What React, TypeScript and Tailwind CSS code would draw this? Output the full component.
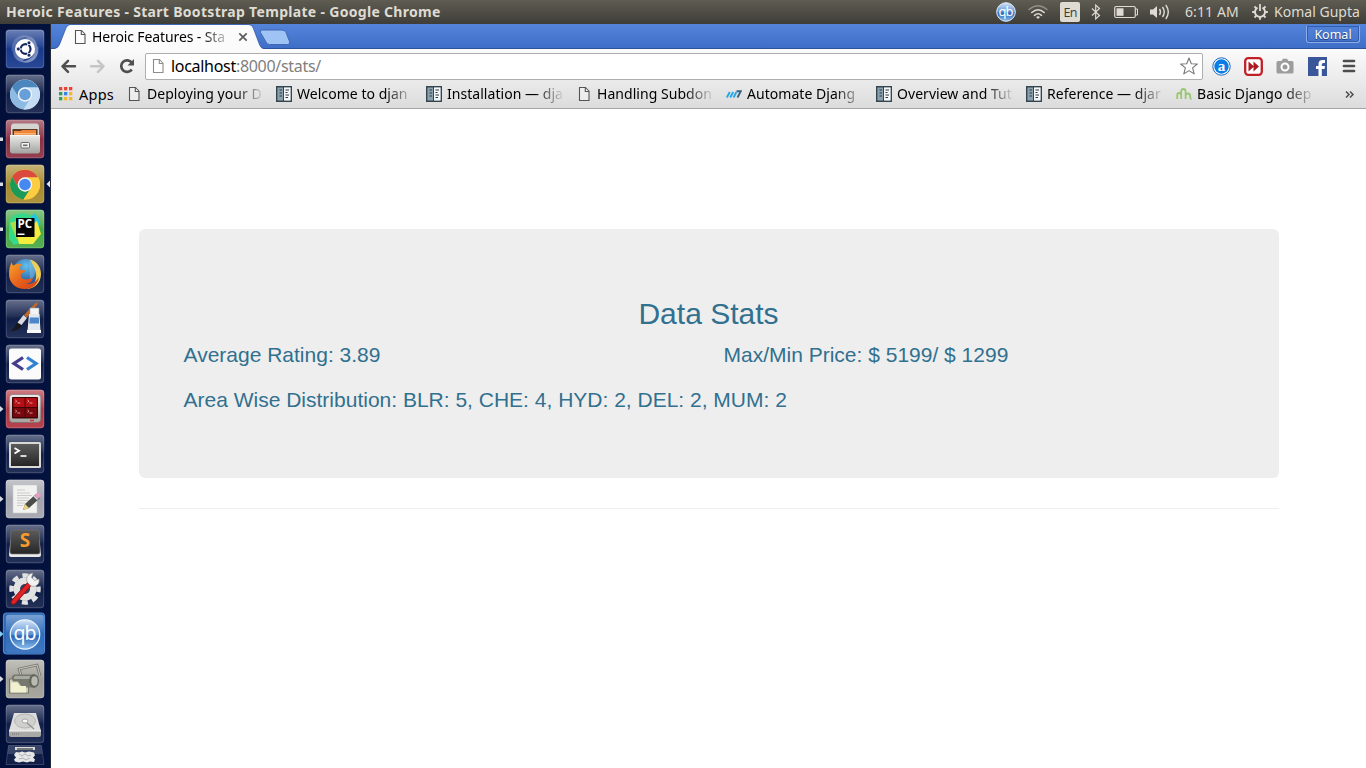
import React from "react";

type IconProps = { children: React.ReactNode };

const launcherFont = "'Noto Sans', sans-serif";

function Defs() {
  return (
    <svg width="0" height="0" className="absolute">
      <defs>
        <linearGradient id="gloss" x1="0" y1="0" x2="0" y2="1">
          <stop offset="0" stopColor="#fff" stopOpacity="0.36" />
          <stop offset="0.42" stopColor="#fff" stopOpacity="0.08" />
          <stop offset="0.5" stopColor="#fff" stopOpacity="0" />
          <stop offset="1" stopColor="#fff" stopOpacity="0.08" />
        </linearGradient>
        <linearGradient id="metal" x1="0" y1="0" x2="0" y2="1">
          <stop offset="0" stopColor="#ececea" />
          <stop offset="1" stopColor="#a3a3a0" />
        </linearGradient>
        <linearGradient id="dark" x1="0" y1="0" x2="0" y2="1">
          <stop offset="0" stopColor="#5b5b5b" />
          <stop offset="1" stopColor="#262626" />
        </linearGradient>
        <linearGradient id="orb" x1="0" y1="0" x2="0" y2="1">
          <stop offset="0" stopColor="#d5e6f8" />
          <stop offset="0.5" stopColor="#5b91d3" />
          <stop offset="0.55" stopColor="#2764b4" />
          <stop offset="1" stopColor="#8fc0ee" />
        </linearGradient>
        <linearGradient id="flame" x1="0" y1="0" x2="1" y2="1">
          <stop offset="0" stopColor="#f6a52c" />
          <stop offset="0.5" stopColor="#e8641d" />
          <stop offset="1" stopColor="#d23c14" />
        </linearGradient>
        <radialGradient id="globe" cx="0.5" cy="0.25" r="0.8">
          <stop offset="0" stopColor="#63c0ea" />
          <stop offset="1" stopColor="#15388a" />
        </radialGradient>
        <linearGradient id="swirl" x1="0" y1="0" x2="1" y2="1">
          <stop offset="0" stopColor="#fff" stopOpacity="0.1" />
          <stop offset="1" stopColor="#fff" stopOpacity="0.5" />
        </linearGradient>
      </defs>
    </svg>
  );
}

function Tile({ color, children }: IconProps & { color: string }) {
  return (
    <svg width="40" height="40" viewBox="0 0 40 40" className="block shrink-0">
      <rect x="0.8" y="0.8" width="38.4" height="38.4" rx="3.2" fill={color} />
      <rect x="0.8" y="0.8" width="38.4" height="38.4" rx="3.2" fill="url(#gloss)" />
      <rect x="1.3" y="1.3" width="37.4" height="37.4" rx="2.8" fill="none" stroke="#fff" strokeOpacity="0.16" />
      {children}
    </svg>
  );
}

const NAVY = "#111f49";

function UbuntuIcon() {
  return (
    <Tile color="#17398c">
      <path d="M7 23C4 9 18 2 27 9c-9-3-16 2-17 10zM33 17c3 14-11 21-20 14 9 3 16-2 17-10zM17 33C6 31 6 17 12 11c-3 8 1 15 8 18zM23 7c11 2 11 16 5 22 3-8-1-15-8-18z" fill="url(#swirl)" />
      <circle cx="20" cy="20" r="10" fill="#fff" />
      <circle cx="20.6" cy="20" r="4.9" fill="none" stroke="#17275e" strokeWidth="2.2" />
      <path d="M20.6 20L13 20M20.6 20l4 -7.5M20.6 20l4 7.5" stroke="#fff" strokeWidth="1.1" />
      <circle cx="13.3" cy="20" r="1.9" fill="#17275e" stroke="#fff" strokeWidth="0.7" />
      <circle cx="24" cy="13.8" r="1.9" fill="#17275e" stroke="#fff" strokeWidth="0.7" />
      <circle cx="24" cy="26.2" r="1.9" fill="#17275e" stroke="#fff" strokeWidth="0.7" />
    </Tile>
  );
}

function ChromeMark({ a, b, c, center }: { a: string; b: string; c: string; center: string }) {
  return (
    <g>
      <circle cx="20" cy="20.5" r="15" fill={c} />
      <path d="M7 13A15 15 0 0 1 33 13.5H20A7 7 0 0 0 13.9 24z" fill={a} />
      <path d="M7 13A15 15 0 0 0 18.5 35.4L26 24A7 7 0 0 1 13.9 24z" fill={b} />
      <path d="M20 13.5H33.3A15 15 0 0 1 18.5 35.4L26 24A7 7 0 0 0 20 13.5z" fill={c} />
      <circle cx="20" cy="20.5" r="7.2" fill="#f1f4f8" />
      <circle cx="20" cy="20.5" r="5.8" fill={center} />
    </g>
  );
}

function FilesIcon() {
  return (
    <Tile color="#8b2f42">
      <path d="M6 8q0-3.500 3-3.500h22q3 0 3 3.500v9H6z" fill="#d4d4d1" />
      <path d="M7.500 10h25v7h-25z" fill="#5c3a25" />
      <path d="M9 12h7l1-1h14v6H9z" fill="#ee8538" />
      <path d="M9 14h22v1.500H9z" fill="#f8b57a" />
      <path d="M5 16h30v15.500q0 3-2.500 3h-25q-2.500 0-2.500-3z" fill="url(#metal)" />
      <path d="M5 16.500h30" stroke="#f6f6f4" />
      <rect x="16" y="23.500" width="8.500" height="5.500" rx="1" fill="#f4f4f2" stroke="#6a6a66" />
      <rect x="18" y="25.500" width="4.500" height="1.600" fill="#6a6a66" />
    </Tile>
  );
}

function PyCharmIcon() {
  return (
    <Tile color="#48a944">
      <path d="M4 12l5-6 8-2 12 3 3 14-14 12-9 3-5-6z" fill="#35d98a" />
      <path d="M26 8l4-4 5 9-3 9z" fill="#21c6e8" />
      <path d="M5 14l7 17 2-20z" fill="#a8dc4a" />
      <path d="M12 26l20-14 4 13-8 10-14 0z" fill="#f2ec3f" />
      <rect x="11" y="9" width="18.500" height="19" fill="#050505" />
      <text x="12.500" y="19" fontFamily="'Open Sans', sans-serif" fontWeight="700" fontSize="11.500" fill="#fff">PC</text>
      <rect x="12.500" y="24.500" width="7" height="1.500" fill="#fff" />
    </Tile>
  );
}

function FirefoxIcon() {
  return (
    <Tile color={NAVY}>
      <circle cx="21" cy="19" r="14" fill="url(#globe)" />
      <path d="M25 5.500c6 1.500 11 7 11 14.500 0 9-7 15-15 15 8-3 11-9 10-15-.5-5-3-8-6-14.500z" fill="#f0cd55" />
      <path d="M24 5.500c4 3 6 7 6 12 0 4-2 7-5 8z" fill="#8fd0ee" opacity=".4" />
      <path d="M7 8c0 2 .5 3 1.500 3.500 3-2 6-2 9-1-2 1-3.500 3-2.500 5l5 1c0 2-3 2.500-4 3.500-1 2.500 1 5.500 5 5.500 3 0 4-2 7-1-1 3-3.500 5-7 5.500 6 .5 10-2 13-7-1 7.500-6.500 12-14 12C11 35 4 29 4 20c0-5 1-9 3-12z" fill="url(#flame)" />
    </Tile>
  );
}

function PaintIcon() {
  return (
    <Tile color={NAVY}>
      <path d="M5 32c4-1 5-6 8-9l4 3c-2 4-6 6-12 6z" fill="#16181c" />
      <path d="M12.500 23.500l6-7.500 3.500 3-5.500 7z" fill="#d8dade" />
      <path d="M19 16L31 3.500l2 1-11 14z" fill="#c36a22" />
      <path d="M25 9h9v7h-9z" fill="#f2f4f6" stroke="#9aa2aa" strokeWidth=".6" />
      <path d="M24 15h10.500l1 17h-13z" fill="#e3e9ef" />
      <path d="M24.800 18.500h9l.3 6h-9.800z" fill="#4c87c9" />
      <path d="M22 31h14v3H22z" fill="#fafafa" />
    </Tile>
  );
}

function CodeIcon() {
  return (
    <Tile color={NAVY}>
      <rect x="4" y="4.500" width="32" height="31" rx="2.500" fill="#fbfbfb" />
      <path d="M18 13.500l-9 6 9 6" fill="none" stroke="#433d8c" strokeWidth="3.300" />
      <path d="M22 13.500l9 6-9 6" fill="none" stroke="#3182d2" strokeWidth="3.300" />
    </Tile>
  );
}

function TerminatorIcon() {
  return (
    <Tile color="#b03440">
      <rect x="4.300" y="5.500" width="31.500" height="28" rx="3.500" fill="url(#metal)" stroke="#77706e" strokeWidth=".6" />
      <rect x="7" y="8" width="26" height="21.500" rx="1" fill="#3f0608" />
      {[8.300, 20.500].map((x) =>
        [9, 19].map((y) => (
          <g key={`${x}-${y}`}>
            <rect x={x} y={y} width="11.300" height="9" fill={y === 9 ? "#b50f16" : "#780a0f"} />
            <path d={`M${x + 2} ${y + 2}l1.500 1.200-1.500 1.200M${x + 4} ${y + 5}h3`} stroke="#f0b9b9" strokeWidth=".8" fill="none" />
          </g>
        ))
      )}
      <path d="M25 31.500h4" stroke="#d03030" strokeWidth="1.500" />
    </Tile>
  );
}

function TerminalIcon() {
  return (
    <Tile color={NAVY}>
      <rect x="4" y="8" width="32" height="26" rx="1.500" fill="#d9d9d6" />
      <rect x="6" y="10" width="28" height="22" fill="url(#dark)" />
      <path d="M9.500 14l4.500 2.700-4.500 2.700" fill="none" stroke="#fff" strokeWidth="1.800" />
      <path d="M15.500 22h6" stroke="#fff" strokeWidth="1.600" />
    </Tile>
  );
}

function EditorIcon() {
  return (
    <Tile color="#a3a4ad">
      <rect x="8" y="6" width="24" height="28" fill="#f2f2f0" stroke="#c9c9c6" strokeWidth=".6" />
      <path d="M12 11h8M12 14h13M12 16.500h15M12 19h12M12 21.500h14M12 24h8M12 26.500h6" stroke="#c6c6c6" strokeWidth=".9" />
      <path d="M18 31l2-6 11-10 4 4-11 10z" fill="#4a4d48" />
      <path d="M18 31l2-6 4 4z" fill="#ead57d" />
      <path d="M29.500 16.500l2-2q2-1.500 3.500 0t0 3.500l-2 2z" fill="#e49bc5" />
      <path d="M29 17l3.500 3.500" stroke="#d9dddf" strokeWidth="1.500" />
    </Tile>
  );
}

function SublimeIcon() {
  return (
    <Tile color={NAVY}>
      <path d="M5.500 16L4 31q0 2 2 2h28q2 0 2-2l-1.500-15z" fill="#e8e8e8" />
      <path d="M8 6h24q2 0 2.300 2L35 28q0 2-2 2H7q-2 0-2-2L5.800 8Q6 6 8 6z" fill="url(#dark)" stroke="#777" strokeWidth=".6" />
      <text x="20" y="22.500" textAnchor="middle" fontFamily="'Open Sans', sans-serif" fontWeight="700" fontSize="19" fill="#f79a2d">S</text>
    </Tile>
  );
}

function SettingsIcon() {
  return (
    <Tile color={NAVY}>
      <circle cx="20" cy="20" r="11.500" fill="#e2e2e2" />
      <circle cx="20" cy="20" r="13.500" fill="none" stroke="#e2e2e2" strokeWidth="4.500" strokeDasharray="6 4.603" strokeDashoffset="3" />
      <circle cx="20" cy="20" r="5" fill="#31405f" />
      <path d="M8.500 33l15-17" stroke="#8d0c10" strokeWidth="5.500" strokeLinecap="round" />
      <path d="M8.500 33l15-17" stroke="#dd2326" strokeWidth="4" strokeLinecap="round" />
      <path d="M22 13q-1.500-6 3.500-8.500l2.500-.5-1.500 4.500 3 3 4.500-1.500q1 5-3.500 7-3 1-5-.5z" fill="#f1f1f1" stroke="#88898c" strokeWidth=".6" />
    </Tile>
  );
}

function QbIcon() {
  return (
    <svg width="44" height="44" viewBox="-3 -2 44 44" className="-my-0.5 -ml-[3px] block shrink-0">
      <rect x="-1.500" y="-1" width="41" height="41" rx="3.500" fill="#2d66b0" stroke="#4b88cf" strokeWidth="1.200" />
      <rect x="0.800" y="0.800" width="38" height="38" rx="3" fill="#2f6cbb" />
      <rect x="0.800" y="0.800" width="38" height="38" rx="3" fill="url(#gloss)" />
      <circle cx="20" cy="20.500" r="14.700" fill="url(#orb)" stroke="#e8f2fc" strokeWidth="1.300" />
      <text x="20" y="26" textAnchor="middle" fontFamily={launcherFont} fontSize="19.500" textLength="23" fill="#fff">qb</text>
    </svg>
  );
}

function ScannerIcon() {
  return (
    <Tile color="#a09f97">
      <path d="M17 19l-3-9 18-4 3 11" fill="none" stroke="#77776e" strokeWidth="2.800" strokeLinejoin="round" />
      <path d="M17 19l-3-9 18-4 3 11" fill="none" stroke="#c9c9c2" strokeWidth="1" />
      <path d="M4.500 20h19v14h-19z" fill="#cfcfb8" stroke="#666659" strokeWidth=".8" />
      <path d="M9 15.500h21v13H17l-4-6H8q-3-5 1-7z" fill="#77796f" />
      <path d="M10 17h16v3H9q-.5-2 1-3z" fill="#a8aaa0" />
      <ellipse cx="29" cy="22" rx="5" ry="6.700" fill="#63655d" />
      <ellipse cx="29.500" cy="22" rx="3.200" ry="4.800" fill="#b9bab1" />
      <path d="M6 23.500h6l3 3.500h6v6.500H6z" fill="#f1f0cf" />
    </Tile>
  );
}

function DiskIcon() {
  return (
    <Tile color={NAVY}>
      <path d="M9 9h22l5 18H4z" fill="#dededc" />
      <path d="M4 27h32v4q0 2-2 2H6q-2 0-2-2z" fill="#a9a9a7" />
      <path d="M4 27h32" stroke="#f7f7f7" />
      <ellipse cx="20" cy="17" rx="10.500" ry="7" fill="#d0d0ce" stroke="#b4b4b2" />
      <ellipse cx="20" cy="17" rx="3" ry="2" fill="#f6f6f6" stroke="#a8a8a8" />
      <path d="M29 25l-7-6" stroke="#8f8f8d" strokeWidth="1.200" />
      <path d="M7 30h8" stroke="#6e6e6e" strokeDasharray="1 1" />
    </Tile>
  );
}

function FoldedTrashIcon() {
  return (
    <svg width="40" height="24" viewBox="0 0 40 24" className="-mt-[5px] block shrink-0">
      <path d="M3.500 1.500h33L39 20.500H1z" fill={NAVY} stroke="#fff" strokeOpacity=".18" />
      <path d="M3.500 1.500h33L37.500 10h-35z" fill="#fff" opacity=".16" />
      <path d="M10 3h20v3H10z" fill="#dadada" />
      <path d="M12 5h16" stroke="#53595f" strokeWidth="1.500" />
      <path d="M11 8l3 .5 3-1 3 1 4-1 5 1 1 3-2 2 2 2-1 2.500-4-.5-3 1-4-1-4 1-4-1-1-2 2-2-2-2.500z" fill="#e6e8e8" />
      <path d="M14 10l3 2 3-2 3 2 3-1M14 15l4-1 3 2 4-2" stroke="#a9b0b4" fill="none" />
    </svg>
  );
}

function Launcher() {
  const items: { icon: React.ReactNode; mark?: "pip" | "arrow" | "blue"; active?: boolean }[] = [
    { icon: <UbuntuIcon /> },
    { icon: <Tile color={NAVY}><ChromeMark a="#4b86bd" b="#8dbbe4" c="#c4ddf3" center="#679fd8" /></Tile> },
    { icon: <FilesIcon />, mark: "pip" },
    { icon: <Tile color="#a78a2e"><ChromeMark a="#dc4a3e" b="#1b9a58" c="#fdcd41" center="#4688f1" /></Tile>, mark: "pip", active: true },
    { icon: <PyCharmIcon />, mark: "pip" },
    { icon: <FirefoxIcon /> },
    { icon: <PaintIcon /> },
    { icon: <CodeIcon /> },
    { icon: <TerminatorIcon />, mark: "arrow" },
    { icon: <TerminalIcon /> },
    { icon: <EditorIcon />, mark: "arrow" },
    { icon: <SublimeIcon /> },
    { icon: <SettingsIcon /> },
    { icon: <QbIcon />, mark: "blue" },
    { icon: <ScannerIcon />, mark: "arrow" },
    { icon: <DiskIcon /> },
  ];
  return (
    <nav className="flex w-[51px] shrink-0 flex-col gap-[5px] overflow-hidden border-r border-[#252b38] bg-linear-to-r from-[#020f39] to-[#03123e] pt-[5px]">
      {items.map((item, i) => (
        <div key={i} className="flex h-10 shrink-0 items-center">
          <svg width="5" height="10" viewBox="0 0 5 10" className="shrink-0">
            {item.mark === "pip" && <path d="M0 3.500h3v3.500H0z" fill="#d7dade" />}
            {item.mark === "arrow" && <path d="M0 2l3.500 3L0 8z" fill="#d7dade" />}
            {item.mark === "blue" && <path d="M0 2l3.500 3L0 8z" fill="#7fcdf2" />}
          </svg>
          <div className="w-10 shrink-0">{item.icon}</div>
          {item.active && (
            <svg width="5" height="8" viewBox="0 0 5 8" className="shrink-0">
              <path d="M5 .500v7L1.500 4z" fill="#e4e6e9" />
            </svg>
          )}
        </div>
      ))}
      <div className="pl-[5px]"><FoldedTrashIcon /></div>
    </nav>
  );
}

function SystemBar() {
  return (
    <header className="flex h-6 shrink-0 items-center bg-linear-to-b from-[#5f5d52] to-[#3e3d38] font-['Noto_Sans',sans-serif] text-[14px] leading-6 text-[#dfdbd2]">
      <div className="w-[990px] shrink-0 pl-1.5 font-bold whitespace-nowrap tracking-[0.31px]">Heroic Features - Start Bootstrap Template - Google Chrome</div>
      <div className="flex w-[376px] items-center">
        <svg width="32" height="24" viewBox="0 0 32 24">
          <circle cx="16" cy="12" r="9.300" fill="url(#orb)" stroke="#e5eefa" strokeWidth="1" />
          <text x="16" y="16" textAnchor="middle" fontFamily={launcherFont} fontSize="13" textLength="15" fill="#fff">qb</text>
        </svg>
        <svg width="32" height="24" viewBox="0 0 32 24" fill="none" strokeLinecap="round">
          <path d="M7 9.500Q16 2 25 9.500" stroke="#8f8d83" strokeWidth="1.500" />
          <path d="M9.800 12.500Q16 7 22.200 12.500" stroke="#dfdbd2" strokeWidth="1.600" />
          <path d="M12.500 15.300Q16 12.200 19.500 15.300" stroke="#dfdbd2" strokeWidth="1.600" />
          <path d="M14 17q2-1.500 4 0l-2 2z" fill="#dfdbd2" />
        </svg>
        <div className="ml-1.5 flex h-5 w-5 items-center justify-center rounded-[2px] bg-[#dfdbd2] pt-px font-['Open_Sans',sans-serif] text-[12.5px] tracking-[-0.8px] text-[#3c3b37]">En</div>
        <svg width="32" height="24" viewBox="0 0 32 24" fill="none" stroke="#dfdbd2" strokeWidth="1.200">
          <path d="M12 8.500l7.500 7-3.800 3.500V5l3.800 3.500-7.500 7" />
        </svg>
        <svg width="32" height="24" viewBox="0 0 32 24">
          <rect x="2.700" y="6.500" width="20.600" height="11" rx="1.500" fill="none" stroke="#dfdbd2" strokeWidth="1.200" />
          <rect x="4.500" y="8.300" width="7" height="7.500" fill="#dfdbd2" />
          <path d="M24 9h1.500v6H24" stroke="#dfdbd2" fill="none" />
        </svg>
        <svg width="34" height="24" viewBox="0 0 34 24" fill="none" stroke="#dfdbd2" strokeWidth="1.400">
          <path d="M6 9.500h3l4-3.500v12l-4-3.500H6z" fill="#dfdbd2" stroke="none" />
          <path d="M15.500 9q2 3 0 6M18.500 7q3.500 5 0 10M21.800 5q5 7 0 14" />
        </svg>
        <span className="ml-[7px] w-[66px] whitespace-nowrap tracking-[0.1px]">6:11 AM</span>
        <svg width="18" height="24" viewBox="0 0 18 24" fill="none" stroke="#dfdbd2">
          <path d="M6.500 7.600A5 5 0 1 0 11.500 7.600" strokeWidth="1.900" />
          <path d="M9 4v7" strokeWidth="1.800" />
          <path d="M1.200 12h2.600M14.200 12h2.600M9 17.200v2.600M3.500 6.500l1.800 1.800M14.500 6.500l-1.800 1.800M3.500 17.500l1.800-1.800M14.500 17.500l-1.800-1.800" strokeWidth="1.900" />
        </svg>
        <span className="ml-[5px] whitespace-nowrap tracking-[0.02px]">Komal Gupta</span>
      </div>
    </header>
  );
}

function PageIcon({ color = "#555" }: { color?: string }) {
  return (
    <svg width="16" height="16" viewBox="0 0 16 16" className="shrink-0" fill="#fff" fillOpacity=".4" stroke={color} strokeWidth="1.100">
      <path d="M3.500 1.500h6l3.500 3.700v9.300H3.500z" />
      <path d="M9.300 1.500v4h3.700" />
    </svg>
  );
}

function DocsIcon() {
  return (
    <svg width="16" height="16" viewBox="0 0 16 16" className="shrink-0">
      <path d="M.700.700h14.600v14.600H.700z" fill="#8ba0ad" stroke="#35454f" strokeWidth="1.400" />
      <path d="M8 1.500h6.500v13H8z" fill="#f5f6f7" />
      <path d="M7.500 1v14" stroke="#35454f" />
      <path d="M3.500 4h2.500M3.500 7h2.500M3.500 10h2.500M9.500 4h3.500M9.500 6.500h2M9.500 9h3.500M9.500 11.500h2.500" stroke="#2c3a44" strokeWidth="1.200" />
    </svg>
  );
}

function AutomateIcon() {
  return (
    <svg width="16" height="16" viewBox="0 0 16 16" className="shrink-0" fill="none" strokeWidth="1.900">
      <path d="M.800 11.500l3-5.500M4.200 11.500l3-5.500M7.600 11.500l2.800-5.500" stroke="#25a7e8" />
      <path d="M10.500 5.200h4.300l-3.300 6.300" stroke="#3d6484" />
    </svg>
  );
}

function HostIcon() {
  return (
    <svg width="16" height="16" viewBox="0 0 16 16" className="shrink-0" fill="none" stroke="#9cc772" strokeWidth="1.800">
      <path d="M1.200 13V9.500q0-2.500 2-2.500t2 2.500V13M5.200 9V5.500q0-2.500 2.200-2.500t2.200 2.500V13M9.600 10q0-2.500 2.300-2.500t2.300 2.500v1.500q0 1.500 1.300 1.500" />
    </svg>
  );
}

function AppsIcon() {
  const colors = ["#ea4335", "#ea4335", "#ea4335", "#2f9e59", "#3b82e8", "#f4b62b", "#2f9e59", "#f4b62b", "#f4b62b"];
  return (
    <svg width="14" height="14" viewBox="0 0 14 14" className="shrink-0">
      {colors.map((c, i) => (
        <rect key={i} x={(i % 3) * 5} y={Math.floor(i / 3) * 5} width="3.300" height="3.300" fill={c} />
      ))}
    </svg>
  );
}

const bookmarks: { icon: React.ReactNode; label: string }[] = [
  { icon: <PageIcon />, label: "Deploying your D" },
  { icon: <DocsIcon />, label: "Welcome to djan" },
  { icon: <DocsIcon />, label: "Installation — dja" },
  { icon: <PageIcon />, label: "Handling Subdon" },
  { icon: <AutomateIcon />, label: "Automate Djang" },
  { icon: <DocsIcon />, label: "Overview and Tut" },
  { icon: <DocsIcon />, label: "Reference — djar" },
  { icon: <HostIcon />, label: "Basic Django dep" },
];

function TabStrip() {
  return (
    <div className="flex h-[25px] shrink-0 items-start justify-between border-b border-[#2d529b] bg-linear-to-b from-[#5484da] to-[#3f6ec8]">
      <div className="relative z-10 flex h-[25px] w-[245px] items-center">
        <svg width="245" height="25" viewBox="0 0 245 25" className="absolute left-0 top-0">
          <path d="M0 25h3q4-.500 5.500-4L15 4q1.300-3 4-3h179q3 0 4.200 3l6.300 17q1.500 4 5 4z" fill="#fbfbfb" />
          <path d="M0 24.500h3q4-.500 5.500-4L15 4q1.300-3.500 4-3.500h179q3 0 4.200 3.500l6.300 16.500q1.500 4 5 4" fill="none" stroke="#34599f" strokeOpacity=".7" />
          <path d="M211 6h20q3 0 4 2.500l3.500 9q1 3-2 3h-18q-2.500 0-3.500-2.500L209.500 8.500Q208.500 6 211 6z" fill="#a0c3f5" stroke="#4069b4" />
        </svg>
        <div className="relative flex items-center pl-[21px] pt-px">
          <PageIcon />
          <span className="ml-1 w-[140px] whitespace-nowrap bg-linear-to-r from-black from-[78%] to-transparent bg-clip-text text-[14px] leading-5 tracking-[-0.12px] text-transparent">Heroic Features - Sta</span>
          <svg width="10" height="10" viewBox="0 0 10 10" className="ml-[6px]"><path d="M1.300 1.300l7.400 7.400M8.700 1.300L1.300 8.700" stroke="#5c5c5c" strokeWidth="1.700" /></svg>
        </div>
      </div>
      <div className="mr-1.5 mt-0.5 flex h-[17px] w-[54px] items-center justify-center rounded-b-[3px] border border-t-0 border-[#8caee8] pt-[3px] text-[12.5px] leading-none text-white shadow-[inset_0_0_0_1px_#315caf] [text-shadow:0_1px_1px_#16336e]">Komal</div>
    </div>
  );
}

function Toolbar() {
  return (
    <div className="flex h-[60px] shrink-0 flex-col border-b border-[#a5a5a5] bg-linear-to-b from-[#fbfbfb] to-[#dcdcdc]">
      <div className="flex h-[34px] items-center">
        <svg width="94" height="28" viewBox="0 0 94 28" fill="none" className="shrink-0">
          <path d="M24 14.300H11.500M17 8.800l-5.500 5.500 5.500 5.500" stroke="#4f4f4f" strokeLinecap="round" strokeLinejoin="round" strokeWidth="2.500" />
          <path d="M40 14.300h12.500M47 8.800l5.500 5.500-5.500 5.500" stroke="#c6c6c6" strokeLinecap="round" strokeLinejoin="round" strokeWidth="2.500" />
          <path d="M80.800 10.800A5.800 5.800 0 1 0 80.800 17.400" stroke="#4f4f4f" strokeWidth="2.700" />
          <path d="M83 7v6.500h-6.500z" fill="#4f4f4f" />
        </svg>
        <div className="flex h-[27px] w-[1058px] shrink-0 items-center rounded-[2px] border border-[#aeaeae] bg-white">
          <div className="ml-1"><PageIcon color="#8d8d8d" /></div>
          <span className="ml-[5px] grow text-[16px] leading-6 tracking-[-0.3px] text-[#808080]"><span className="text-black">localhost</span>:8000/stats/</span>
          <svg width="18" height="18" viewBox="0 0 18 18" className="mr-1" fill="#fff" stroke="#777" strokeWidth="1.100" strokeLinejoin="round">
            <path d="M9 1l2.300 5.700 6 .300-4.700 3.900 1.600 6L9 13.600 3.800 16.900l1.600-6L.700 7l6-.300z" />
          </svg>
        </div>
        <div className="flex h-[28px] grow items-center">
          <svg width="19" height="19" viewBox="0 0 19 19" className="ml-[9px]">
            <circle cx="9.500" cy="9.500" r="8.700" fill="#fff" stroke="#1766bb" strokeWidth="1" />
            <circle cx="9.500" cy="9.500" r="7.200" fill="#0b7ce5" />
            <text x="9.500" y="13.700" textAnchor="middle" fontFamily="'Liberation Serif', serif" fontWeight="700" fontSize="15" fill="#fff">a</text>
          </svg>
          <svg width="19" height="19" viewBox="0 0 19 19" className="ml-[13px]">
            <rect x="1.200" y="1.200" width="16.600" height="16.600" rx="3" fill="#fff" stroke="#c02026" strokeWidth="2.300" />
            <path d="M4.500 4.500l5.500 5-5.500 5zM9.500 4.500l5.500 5-5.500 5z" fill="#ad1a20" />
          </svg>
          <svg width="18" height="18" viewBox="0 0 18 18" className="ml-[13px]">
            <path d="M2 4h3.500l1.500-2.200h4L12.500 4H16q1.500 0 1.500 1.500V15q0 1.500-1.500 1.500H2Q.500 16.500.500 15V5.500Q.500 4 2 4z" fill="#9c9c9c" />
            <circle cx="9" cy="10" r="3.500" fill="none" stroke="#fff" strokeWidth="2" />
          </svg>
          <svg width="19" height="19" viewBox="0 0 19 19" className="ml-[14px]">
            <rect width="19" height="19" fill="#3a5899" />
            <path d="M10.500 19v-7H8V9h2.500V7q0-4 4-4H17v3h-1.700q-1.500 0-1.500 1.500V9H17l-.500 3h-2.700v7z" fill="#fff" />
          </svg>
          <svg width="14" height="14" viewBox="0 0 14 14" className="ml-[15px]">
            <path d="M2 2h10M2 7h10M2 12h10" stroke="#4d4d4d" strokeWidth="2.700" strokeLinecap="round" />
          </svg>
        </div>
      </div>
      <div className="flex h-[22px] items-center text-[14px] leading-[22px] text-black">
        <div className="flex w-[75px] shrink-0 items-center pl-2">
          <AppsIcon />
          <span className="ml-1.5 text-[14.5px] tracking-[0.25px]">Apps</span>
        </div>
        {bookmarks.map((b) => (
          <div key={b.label} className="flex w-[150px] shrink-0 items-center">
            {b.icon}
            <span className="ml-[5px] w-[118px] whitespace-nowrap bg-linear-to-r from-black from-[74%] to-transparent bg-clip-text tracking-[0.04px] text-transparent">{b.label}</span>
          </div>
        ))}
        <svg width="10" height="9" viewBox="0 0 10 9" className="ml-[19px]" fill="none" stroke="#4c4c4c" strokeWidth="1.500"><path d="M1 1.500l3 3-3 3M5 1.500l3 3-3 3" /></svg>
      </div>
    </div>
  );
}

export default function App() {
  return (
    <div className="flex h-[768px] w-[1366px] flex-col overflow-hidden bg-white">
      <Defs />
      <SystemBar />
      <div className="flex min-h-0 grow">
        <Launcher />
        <div className="flex w-[1315px] flex-col font-['Noto_Sans',sans-serif]">
          <TabStrip />
          <Toolbar />
          <main className="mx-[88px] mt-[120px] w-[1140px] font-['Liberation_Sans',Arial,sans-serif] text-[#31708f]">
            <section className="h-[249px] rounded-[6px] bg-[#eeeeee] pt-[68px] pr-[45.5px] pl-[44.5px]">
              <h1 className="text-center text-[30px] leading-[33px]">Data Stats</h1>
              <div className="mt-[10px] grid grid-cols-2 text-[21px] leading-[30px]">
                <p>Average Rating: 3.89</p>
                <p className="pl-[15px]">Max/Min Price: $ 5199/ $ 1299</p>
                <p className="col-span-2 mt-[15px]">Area Wise Distribution: BLR: 5, CHE: 4, HYD: 2, DEL: 2, MUM: 2</p>
              </div>
            </section>
            <hr className="mt-[30px] border-[#eeeeee]" />
          </main>
        </div>
      </div>
    </div>
  );
}
